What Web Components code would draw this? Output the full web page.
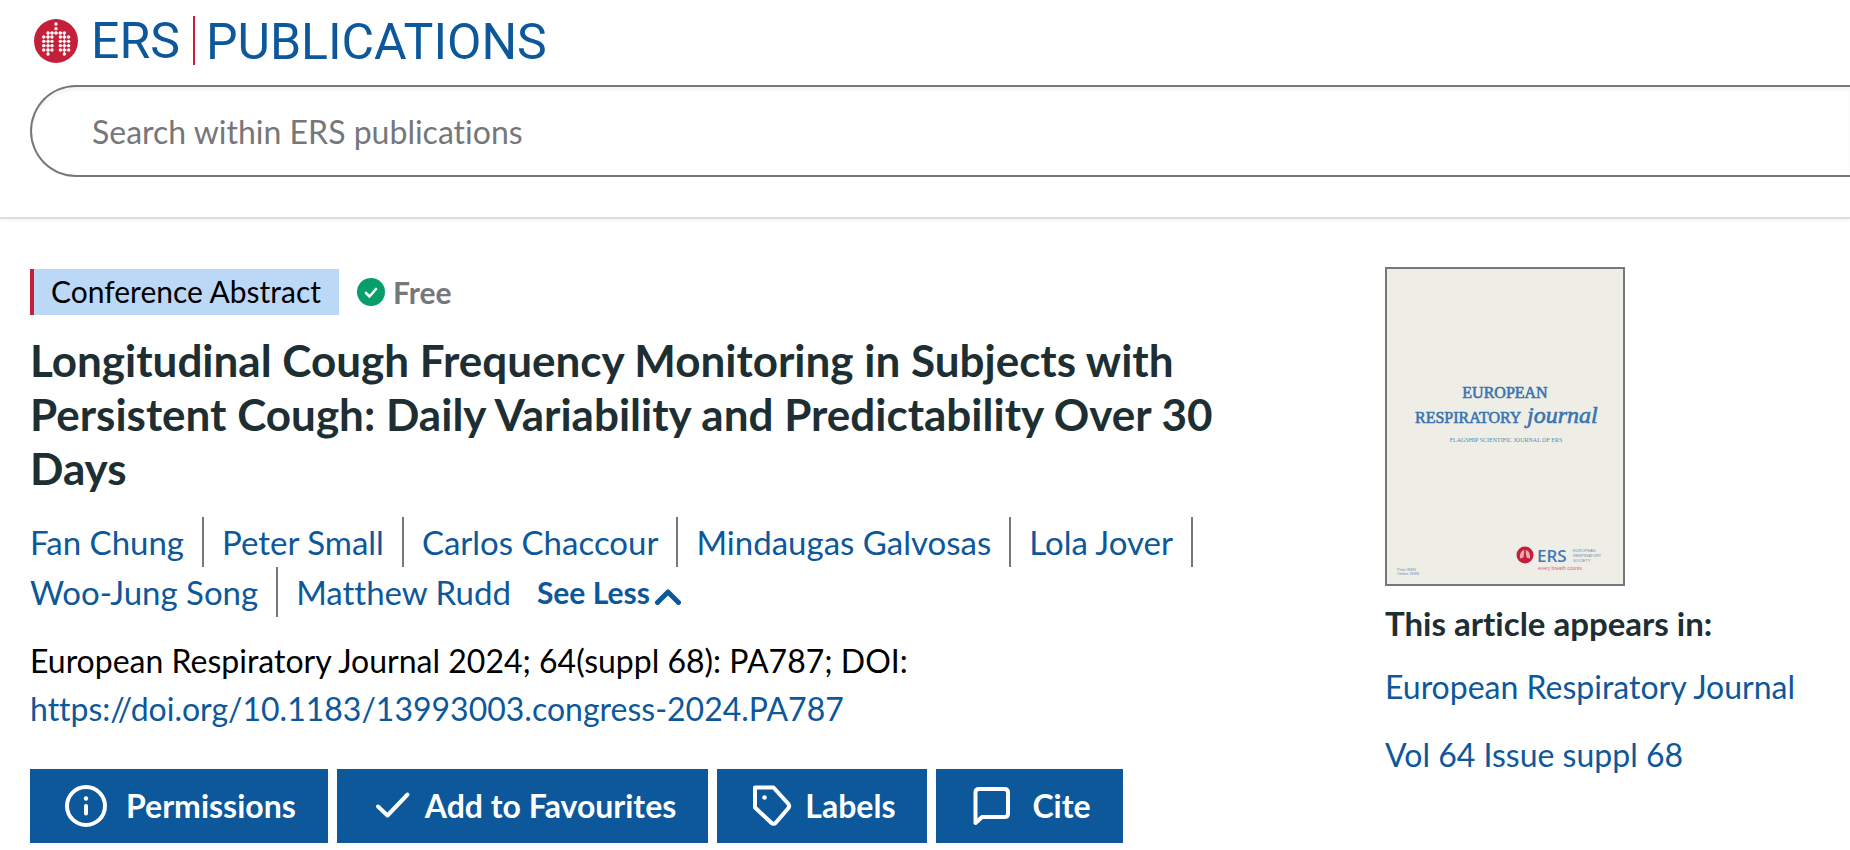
<!DOCTYPE html>
<html lang="en">
<head>
<meta charset="utf-8">
<meta name="viewport" content="width=device-width, initial-scale=1">
<title>Longitudinal Cough Frequency Monitoring | ERS Publications</title>
<style>
  body {
    --brand-blue: #0d589b;
    --brand-red: #c5203a;
    --grey: #76777a;
    --ink: #1d2f33;

    margin: 0;
    background: #fff;
    color: #000;
    font-family: Lato, "Liberation Sans", sans-serif;
    font-size: 32px;
    font-variant-ligatures: none;
    line-height: 48px;
  }
</style>
</head>
<body>
<site-header></site-header>
<article-page>
  <article-badge slot="badge">Conference Abstract</article-badge>
  <access-label slot="badge">Free</access-label>
  <span slot="title">Longitudinal Cough Frequency Monitoring in Subjects with Persistent Cough: Daily Variability and Predictability Over 30 Days</span>
  <author-list slot="authors" names="Fan Chung|Peter Small|Carlos Chaccour|Mindaugas Galvosas|Lola Jover|Woo-Jung Song|Matthew Rudd"></author-list>
  <article-citation slot="citation" href="https://doi.org/10.1183/13993003.congress-2024.PA787">European Respiratory Journal 2024; 64(suppl 68): PA787; DOI:</article-citation>
  <action-button slot="actions" icon="info" wide>Permissions</action-button>
  <action-button slot="actions" icon="check">Add to Favourites</action-button>
  <action-button slot="actions" icon="tag">Labels</action-button>
  <action-button slot="actions" icon="comment" wide>Cite</action-button>
  <journal-issue slot="issue">
    <span slot="journal">European Respiratory Journal</span>
    <span slot="volume">Vol 64 Issue suppl 68</span>
  </journal-issue>
</article-page>

<script>
class LungMark extends HTMLElement {
  constructor() {
    super();
    this.attachShadow({ mode: "open" });
  }

  static get styles() {
    return `
      :host {
        display: block;
        width: 44px;
        height: 44px;
      }

      svg {
        display: block;
        width: 100%;
        height: 100%;
      }
    `;
  }

  // each row: y position, then the x position of every dot
  static get rows() {
    return [
      [15, 66],
      [29, 66],
      [42, 42, 54, 66, 79, 91],
      [54, 29, 42, 54, 79, 91, 104],
      [67, 29, 42, 54, 79, 91, 104],
      [80, 29, 42, 54, 79, 91, 104],
      [93, 29, 42, 54, 79, 91, 104],
      [105, 42, 91]
    ];
  }

  connectedCallback() {
    this.render();
  }

  render() {
    const dots = LungMark.rows
      .map(([y, ...xs]) => xs.map(x => `<circle cx="${x}" cy="${y}" r="5"/>`).join(""))
      .join("");

    this.shadowRoot.innerHTML = `
    <style>${LungMark.styles}</style>
    <svg viewBox="0 0 132 132" aria-hidden="true">
      <circle cx="66" cy="66" r="66" fill="#c5203a"/>
      <g fill="#fff">${dots}</g>
      <path d="M42 42H91M29 54H54M29 67H54M29 80H54M29 93H54M79 54H104M79 67H104M79 80H104M79 93H104M42 42V105M91 42V105" stroke="#fff" stroke-width="2" fill="none"/>
    </svg>`;
  }
}

customElements.define("lung-mark", LungMark);

class SiteHeader extends HTMLElement {
  constructor() {
    super();
    this.attachShadow({ mode: "open" });
  }

  static get styles() {
    return `
      :host {
        display: block;
        padding: 16px 0 40px 30px;
        border-bottom: 2px solid #dae0e0;
        box-shadow: 0 1px 4px #0001;
      }

      .brand {
        display: flex;
        align-items: center;
        width: fit-content;
        height: 49px;
        margin-left: 4px;
        color: var(--brand-blue);
        font-family: Roboto, sans-serif;
        font-size: 50px;
        line-height: 52px;
        text-decoration: none;
      }

      .name {
        padding: 0 13px 0 13px;
      }

      .section {
        height: 49px;
        padding-left: 11px;
        border-left: 2px solid var(--brand-red);
      }

      form {
        display: flex;
        margin-top: 20px;
      }

      input {
        box-sizing: border-box;
        flex: 1;
        min-width: 0;
        height: 92px;
        padding: 0 30px 0 60px;
        border: 2px solid var(--grey);
        border-right: 0;
        border-radius: 46px 0 0 46px;
        box-shadow: 0 4px 3px #0000000a inset;
        background: #fff;
        font: inherit;
        font-variant-ligatures: none;
        outline: 0;
      }

      input::placeholder {
        color: #76777a;
        opacity: 1;
      }
    `;
  }

  connectedCallback() {
    this.render();
  }

  render() {
    this.shadowRoot.innerHTML = `
    <style>${SiteHeader.styles}</style>
    <header>
      <a class="brand" href="#">
        <lung-mark></lung-mark>
        <span class="name">ERS</span>
        <span class="section">PUBLICATIONS</span>
      </a>
      <form role="search">
        <input type="search" placeholder="Search within ERS publications" aria-label="Search within ERS publications">
      </form>
    </header>`;
  }
}

customElements.define("site-header", SiteHeader);

class ArticleBadge extends HTMLElement {
  constructor() {
    super();
    this.attachShadow({ mode: "open" });
  }

  static get styles() {
    return `
      :host {
        display: block;
        padding: 0 18px 2px 17px;
        border-left: 4px solid var(--brand-red);
        background: #bbd8f6;
        font-size: 30px;
        line-height: 44px;
      }
    `;
  }

  connectedCallback() {
    this.shadowRoot.innerHTML = `<style>${ArticleBadge.styles}</style><slot></slot>`;
  }
}

customElements.define("article-badge", ArticleBadge);

class AccessLabel extends HTMLElement {
  constructor() {
    super();
    this.attachShadow({ mode: "open" });
  }

  static get styles() {
    return `
      :host {
        display: flex;
        align-items: center;
        gap: 8px;
        color: var(--grey);
        font-size: 30px;
        font-weight: 700;
        line-height: 44px;
      }

      svg {
        width: 28px;
        height: 28px;
      }
    `;
  }

  connectedCallback() {
    this.shadowRoot.innerHTML = `
    <style>${AccessLabel.styles}</style>
    <svg viewBox="0 0 28 28" aria-hidden="true">
      <circle cx="14" cy="14" r="14" fill="#089e69"/>
      <path d="M9 15l3.500 3.500L19 11" fill="none" stroke="#fff" stroke-width="2.600" stroke-linecap="round" stroke-linejoin="round"/>
    </svg>
    <slot></slot>`;
  }
}

customElements.define("access-label", AccessLabel);

class AuthorList extends HTMLElement {
  constructor() {
    super();
    this.attachShadow({ mode: "open" });
  }

  static get styles() {
    return `
      :host {
        display: block;
        font-size: 33px;
        line-height: 50px;
      }

      ul {
        display: flex;
        flex-wrap: wrap;
        margin: 0;
        padding: 0;
        list-style: none;
      }

      li {
        margin-right: 18px;
        padding-right: 18px;
        border-right: 2px solid var(--grey);
      }

      li:nth-last-child(2) {
        margin-right: 8px;
        border: 0;
      }

      li:last-child {
        margin: 0;
        padding: 0;
        border: 0;
      }

      a {
        color: var(--brand-blue);
        text-decoration: none;
      }

      button {
        display: flex;
        align-items: center;
        gap: 5px;
        height: 50px;
        padding: 0;
        border: 0;
        background: none;
        color: var(--brand-blue);
        font: inherit;
        font-size: 30px;
        font-weight: 700;
        cursor: pointer;
      }

      svg {
        width: 26px;
        height: 16px;
        margin-top: 10px;
      }
    `;
  }

  connectedCallback() {
    this.render();
  }

  render() {
    const names = this.getAttribute("names").split("|");

    this.shadowRoot.innerHTML = `
    <style>${AuthorList.styles}</style>
    <ul>
      ${names.map(name => `<li><a href="#">${name}</a></li>`).join("")}
      <li>
        <button type="button" aria-expanded="true">See Less<svg viewBox="0 0 26 16" aria-hidden="true"><path d="M2.500 13.500L13 3l10.500 10.500" fill="none" stroke="currentColor" stroke-width="5" stroke-linecap="round" stroke-linejoin="round"/></svg></button>
      </li>
    </ul>`;
  }
}

customElements.define("author-list", AuthorList);

class ArticleCitation extends HTMLElement {
  constructor() {
    super();
    this.attachShadow({ mode: "open" });
  }

  static get styles() {
    return `
      :host {
        display: block;
      }

      a {
        display: block;
        width: fit-content;
        color: var(--brand-blue);
        text-decoration: none;
      }
    `;
  }

  connectedCallback() {
    const href = this.getAttribute("href");

    this.shadowRoot.innerHTML = `
    <style>${ArticleCitation.styles}</style>
    <slot></slot>
    <a href="${href}">${href}</a>`;
  }
}

customElements.define("article-citation", ArticleCitation);

const icons = {
  info: `
    <circle cx="24" cy="24" r="19"/>
    <path d="M24 24v7.500"/>
    <circle cx="24" cy="16.500" r="2.200" fill="currentColor" stroke="none"/>`,
  check: `<path d="M9 24.500L18.500 33.500L38.500 12.500"/>`,
  tag: `
    <path d="M6 5.500H24.500L39 21.500Q41.500 24 39 26.500L27 40.500Q24.500 43 22 40.500L6 25.500Z"/>
    <circle cx="15.500" cy="15.500" r="2.300" fill="currentColor" stroke="none"/>`,
  comment: `<path d="M7.500 41V10.500Q7.500 7 11 7H36.500Q40 7 40 10.500V31.500Q40 35 36.500 35H14Z"/>`
};

class ActionButton extends HTMLElement {
  constructor() {
    super();
    this.attachShadow({ mode: "open" });
  }

  static get styles() {
    return `
      :host {
        display: block;
      }

      button {
        display: flex;
        align-items: center;
        gap: 8px;
        height: 74px;
        padding: 0 32px;
        border: 0;
        background: var(--brand-blue);
        color: #fff;
        font: inherit;
        font-weight: 700;
        cursor: pointer;
      }

      :host([wide]) button {
        gap: 16px;
      }

      svg {
        width: 48px;
        height: 48px;
        fill: none;
        stroke: currentColor;
        stroke-width: 4;
        stroke-linecap: round;
        stroke-linejoin: round;
      }
    `;
  }

  connectedCallback() {
    this.shadowRoot.innerHTML = `
    <style>${ActionButton.styles}</style>
    <button type="button">
      <svg viewBox="0 0 48 48" aria-hidden="true">${icons[this.getAttribute("icon")]}</svg>
      <slot></slot>
    </button>`;
  }
}

customElements.define("action-button", ActionButton);

class JournalCover extends HTMLElement {
  constructor() {
    super();
    this.attachShadow({ mode: "open" });
  }

  static get styles() {
    return `
      :host {
        display: block;
        box-sizing: border-box;
        width: 240px;
        border: 2px solid var(--grey);
        background: #eeeee6;
      }

      svg {
        display: block;
        width: 100%;
      }

      .serif {
        font-family: "Liberation Serif", serif;
        font-size: 16px;
        fill: #3a74b0;
        stroke: #3a74b0;
        stroke-width: 0.6px;
      }

      .journal {
        font-size: 24px;
        font-style: italic;
      }

      .strap {
        font: 6px "Liberation Serif", serif;
        fill: #5f86ad;
      }

      .ers {
        font: 600 17px "Open Sans", sans-serif;
        fill: #3f7ab5;
      }

      .tiny {
        font: 4px "Liberation Sans", sans-serif;
        fill: #6d8fb3;
      }

      .tagline {
        font: 5px "Liberation Sans", sans-serif;
        fill: #dd5f78;
      }
    `;
  }

  connectedCallback() {
    this.render();
  }

  render() {
    this.shadowRoot.innerHTML = `
    <style>${JournalCover.styles}</style>
    <svg viewBox="0 0 236 315" role="img" aria-label="European Respiratory Journal cover">
      <text class="serif" x="118" y="129" text-anchor="middle">EUROPEAN</text>
      <text class="serif" x="28" y="154">RESPIRATORY</text>
      <text class="serif journal" x="140" y="154">journal</text>
      <text class="strap" x="119" y="173" text-anchor="middle">FLAGSHIP SCIENTIFIC JOURNAL OF ERS</text>
      <circle cx="138" cy="286" r="8.500" fill="#c5203a"/>
      <path d="M137.200 281c-3 .500-4.700 4-4.200 8.500l3-.700c1-1.500 1.200-4 1.200-7.800zM138.800 281c3 .500 4.700 4 4.200 8.500l-3-.700c-1-1.500-1.200-4-1.200-7.800z" fill="#eba9b3"/>
      <text class="ers" x="150" y="293">ERS</text>
      <text class="tiny" x="186" y="283">EUROPEAN</text>
      <text class="tiny" x="186" y="288">RESPIRATORY</text>
      <text class="tiny" x="186" y="293">SOCIETY</text>
      <text class="tagline" x="151" y="301">every breath counts</text>
      <text class="tiny" x="10" y="302">Print ISSN</text>
      <text class="tiny" x="10" y="306">Online ISSN</text>
    </svg>`;
  }
}

customElements.define("journal-cover", JournalCover);

class JournalIssue extends HTMLElement {
  constructor() {
    super();
    this.attachShadow({ mode: "open" });
  }

  static get styles() {
    return `
      :host {
        display: block;
      }

      h2 {
        margin: 13px 0 16px;
        color: var(--ink);
        font-size: 33px;
        font-weight: 700;
        line-height: 48px;
      }

      a {
        display: block;
        width: fit-content;
        color: var(--brand-blue);
        text-decoration: none;
      }

      .issue {
        margin-top: 20px;
      }
    `;
  }

  connectedCallback() {
    this.shadowRoot.innerHTML = `
    <style>${JournalIssue.styles}</style>
    <a href="#"><journal-cover></journal-cover></a>
    <h2>This article appears in:</h2>
    <a href="#"><slot name="journal"></slot></a>
    <a class="issue" href="#"><slot name="volume"></slot></a>`;
  }
}

customElements.define("journal-issue", JournalIssue);

class ArticlePage extends HTMLElement {
  constructor() {
    super();
    this.attachShadow({ mode: "open" });
  }

  static get styles() {
    return `
      :host {
        display: grid;
        grid-template-columns: 3fr 1fr;
        gap: 50px;
        padding: 48px 30px 0;
      }

      article {
        min-width: 0;
        padding-right: 50px;
      }

      .badges {
        display: flex;
        align-items: center;
        gap: 18px;
        height: 50px;
      }

      h1 {
        margin: 16px 0 22px;
        color: var(--ink);
        font-size: 44px;
        font-weight: 700;
        line-height: 54px;
      }

      .citation {
        margin: 20px 0 36px;
      }

      .actions {
        display: flex;
        flex-wrap: wrap;
        gap: 9px;
      }

      aside {
        min-width: 0;
      }
    `;
  }

  connectedCallback() {
    this.render();
  }

  render() {
    this.shadowRoot.innerHTML = `
    <style>${ArticlePage.styles}</style>
    <article>
      <div class="badges"><slot name="badge"></slot></div>
      <h1><slot name="title"></slot></h1>
      <slot name="authors"></slot>
      <div class="citation"><slot name="citation"></slot></div>
      <div class="actions"><slot name="actions"></slot></div>
    </article>
    <aside><slot name="issue"></slot></aside>`;
  }
}

customElements.define("article-page", ArticlePage);
</script>
</body>
</html>
